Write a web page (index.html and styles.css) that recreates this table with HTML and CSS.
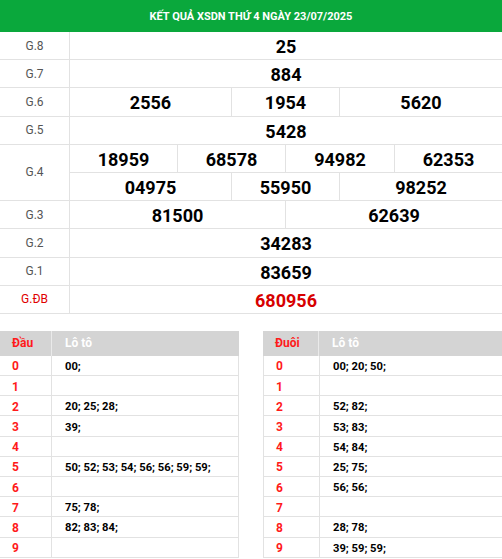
FILE: index.html
```html
<!DOCTYPE html>
<html lang="vi">
<head>
<meta charset="utf-8">
<link rel="stylesheet" href="styles.css">
</head>
<body>
<div class="kq">
  <div class="title">KẾT QUẢ XSDN THỨ 4 NGÀY 23/07/2025</div>
  <div class="grid">
    <div class="lbl">G.8</div>
    <div class="nums c1"><span>25</span></div>
    <div class="lbl">G.7</div>
    <div class="nums c1"><span>884</span></div>
    <div class="lbl">G.6</div>
    <div class="nums c3"><span>2556</span><span>1954</span><span>5620</span></div>
    <div class="lbl">G.5</div>
    <div class="nums c1"><span>5428</span></div>
    <div class="lbl span2">G.4</div>
    <div class="nums c4"><span>18959</span><span>68578</span><span>94982</span><span>62353</span></div>
    <div class="nums c3"><span>04975</span><span>55950</span><span>98252</span></div>
    <div class="lbl">G.3</div>
    <div class="nums c2"><span>81500</span><span>62639</span></div>
    <div class="lbl">G.2</div>
    <div class="nums c1"><span>34283</span></div>
    <div class="lbl">G.1</div>
    <div class="nums c1"><span>83659</span></div>
    <div class="lbl red">G.ĐB</div>
    <div class="nums c1 db"><span>680956</span></div>
  </div>
</div>

<div class="loto">
  <div class="lt">
    <div class="hd"><span class="k">Đầu</span><span class="v">Lô tô</span></div>
    <div class="r"><span class="k">0</span><span class="v">00;</span></div>
    <div class="r"><span class="k">1</span><span class="v"></span></div>
    <div class="r"><span class="k">2</span><span class="v">20; 25; 28;</span></div>
    <div class="r"><span class="k">3</span><span class="v">39;</span></div>
    <div class="r"><span class="k">4</span><span class="v"></span></div>
    <div class="r"><span class="k">5</span><span class="v">50; 52; 53; 54; 56; 56; 59; 59;</span></div>
    <div class="r"><span class="k">6</span><span class="v"></span></div>
    <div class="r"><span class="k">7</span><span class="v">75; 78;</span></div>
    <div class="r"><span class="k">8</span><span class="v">82; 83; 84;</span></div>
    <div class="r"><span class="k">9</span><span class="v"></span></div>
  </div>
  <div class="lt">
    <div class="hd"><span class="k">Đuôi</span><span class="v">Lô tô</span></div>
    <div class="r"><span class="k">0</span><span class="v">00; 20; 50;</span></div>
    <div class="r"><span class="k">1</span><span class="v"></span></div>
    <div class="r"><span class="k">2</span><span class="v">52; 82;</span></div>
    <div class="r"><span class="k">3</span><span class="v">53; 83;</span></div>
    <div class="r"><span class="k">4</span><span class="v">54; 84;</span></div>
    <div class="r"><span class="k">5</span><span class="v">25; 75;</span></div>
    <div class="r"><span class="k">6</span><span class="v">56; 56;</span></div>
    <div class="r"><span class="k">7</span><span class="v"></span></div>
    <div class="r"><span class="k">8</span><span class="v">28; 78;</span></div>
    <div class="r"><span class="k">9</span><span class="v">39; 59; 59;</span></div>
  </div>
</div>
</body>
</html>
```

FILE: styles.css
```css
* { box-sizing: border-box; }
html, body { margin: 0; padding: 0; background: #fff; }
body { font-family: Roboto, "Liberation Sans", sans-serif; color: #000; width: 502px; }

.title {
  height: 32px;
  background: #0aa83c;
  color: #fff;
  font-weight: 700;
  font-size: 11px;
  display: flex;
  align-items: center;
  justify-content: center;
}

.grid {
  display: grid;
  grid-template-columns: 70px 1fr;
  grid-auto-rows: 28.2px;
}
.lbl {
  display: flex;
  align-items: center;
  justify-content: center;
  font-size: 12px;
  color: #555;
  border-right: 1px solid #e2e2e2;
  border-bottom: 1px solid #e2e2e2;
}
.lbl.span2 { grid-row: span 2; }
.lbl.red { color: #e00000; }

.nums {
  display: grid;
  border-bottom: 1px solid #e2e2e2;
}
.nums span {
  display: flex;
  align-items: center;
  justify-content: center;
  padding-top: 2px;
  font-size: 18px;
  font-weight: 700;
  border-left: 1px solid #e2e2e2;
}
.nums span:first-child { border-left: 0; }
.c1 { grid-template-columns: 1fr; }
.c2 { grid-template-columns: 215px 1fr; }
.c3 { grid-template-columns: 161px 108px 1fr; }
.c4 { grid-template-columns: 107px 108px 109px 1fr; }
.db span { color: #d70000; }

.loto {
  display: flex;
  justify-content: space-between;
  margin-top: 17px;
}
.lt {
  width: 239px;
  font-size: 11.2px;
  font-weight: 700;
}
.hd, .r {
  display: grid;
  grid-template-columns: 52px 1fr;
}
.lt:last-child .hd, .lt:last-child .r { grid-template-columns: 56px 1fr; }
.hd {
  height: 25px;
  background: #d4d4d4;
  font-size: 12px;
}
.hd span, .r span {
  display: flex;
  align-items: center;
}
.hd .k { color: #ff1a1a; padding-left: 12px; border-right: 1px solid #eaeaea; }
.hd .v { color: #fff; padding-left: 13px; }
.r { height: 20.2px; border-bottom: 1px solid #e2e2e2; border-right: 1px solid #e2e2e2; }
.r span { padding-top: 2px; }
.r .k { color: #ff1a1a; padding-left: 12px; border-right: 1px solid #e2e2e2; font-size: 12px; }
.r .v { padding-left: 13px; }
.lt:last-child .r { border-left: 1px solid #e2e2e2; border-right: 0; }
```
